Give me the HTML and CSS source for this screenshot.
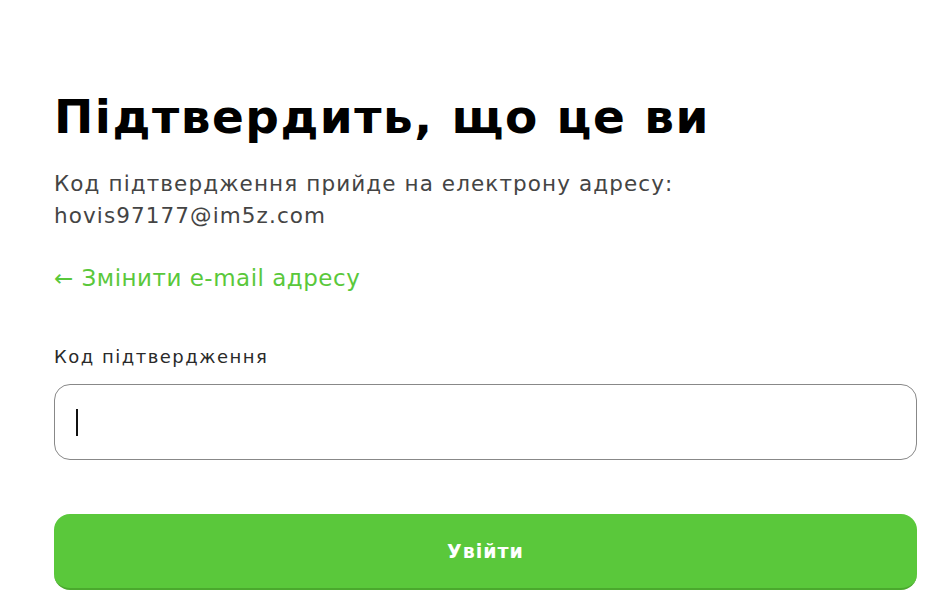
FILE: index.html
```html
<!DOCTYPE html>
<html lang="uk">
<head>
    <meta charset="UTF-8">
    <meta name="viewport" content="width=device-width, initial-scale=1.0">
    <title>Підтвердить, що це ви</title>
    <link rel="stylesheet" href="styles.css">
</head>
<body>
    <div class="container">
        <h1>Підтвердить, що це ви</h1>
        <p class="hint">Код підтвердження прийде на електрону адресу:<br>hovis97177@im5z.com</p>
        <a class="back-link" href="#">&larr; Змінити e-mail адресу</a>

        <form class="code-form">
            <label for="code">Код підтвердження</label>
            <div class="code-field" id="code">
                <span class="caret"></span>
            </div>
            <button type="submit">Увійти</button>
        </form>
    </div>
</body>
</html>
```
FILE: styles.css
```css
body {
    font-family: "DejaVu Sans", Verdana, sans-serif;
    background-color: #fff;
    margin: 0;
    padding: 0;
}
.container {
    padding: 89px 29px 0 54px;
}
h1 {
    color: #000;
    font-size: 47px;
    font-weight: bold;
    letter-spacing: 1.5px;
    line-height: 56px;
    white-space: nowrap;
    margin: 0;
}
.hint {
    color: #444;
    font-size: 21.5px;
    letter-spacing: 1.1px;
    line-height: 32px;
    margin: 23px 0 0;
}
.back-link {
    display: block;
    width: fit-content;
    color: #5ac83b;
    font-size: 23px;
    letter-spacing: 0.5px;
    line-height: 30px;
    margin-top: 31px;
    text-decoration: none;
}
.code-form {
    display: flex;
    flex-direction: column;
    margin-top: 52px;
}
label {
    color: #2a2a2a;
    font-size: 18px;
    letter-spacing: 1.5px;
    line-height: 24px;
}
.code-field {
    height: 74px;
    margin-top: 15px;
    border: 1px solid #888;
    border-radius: 16px;
    display: flex;
    align-items: center;
    padding-left: 21px;
}
.caret {
    width: 2px;
    height: 27px;
    background: #111;
}
button {
    height: 76px;
    margin-top: 54px;
    background: #5ac83b;
    color: #fff;
    font-family: "DejaVu Sans", Verdana, sans-serif;
    font-size: 19px;
    font-weight: bold;
    letter-spacing: 1px;
    border: none;
    border-bottom: 2px solid #4aa92d;
    border-radius: 16px;
    cursor: pointer;
}
```
